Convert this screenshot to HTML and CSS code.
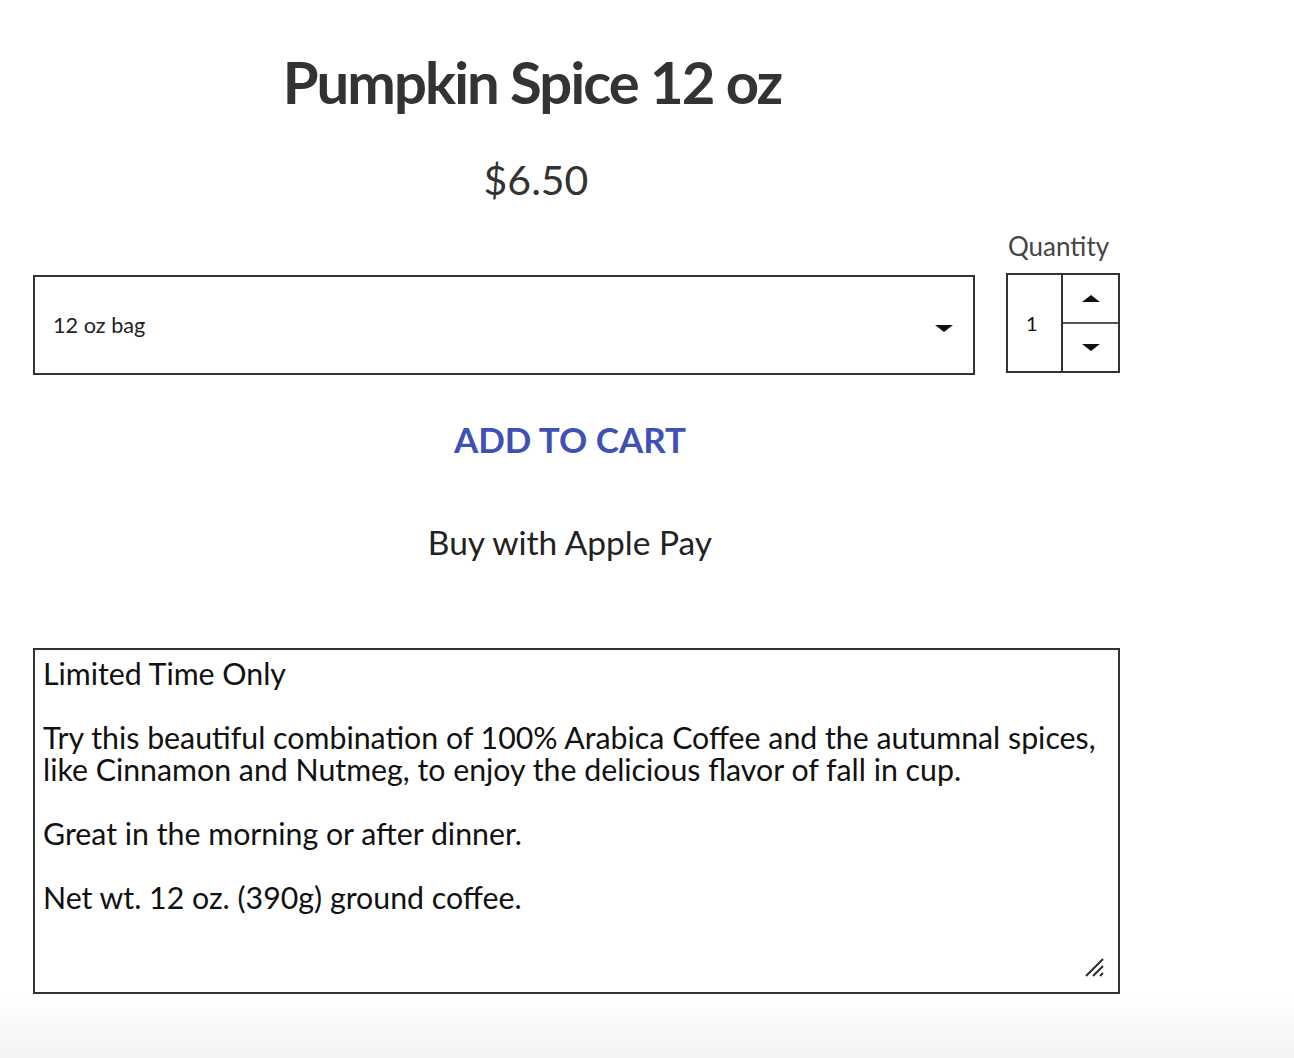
FILE: index.html
```html
<!DOCTYPE html>
<html lang="en">
<head>
<meta charset="utf-8">
<title>Pumpkin Spice 12 oz</title>
<link rel="stylesheet" href="styles.css">
</head>
<body>
<main class="product">
  <h1 class="product-title">Pumpkin Spice 12 oz</h1>
  <div class="product-price">$6.50</div>

  <div class="options-row">
    <div class="select-wrap">
      <select class="variant-select" aria-label="Size">
        <option>12 oz bag</option>
      </select>
      <span class="select-arrow"></span>
    </div>
    <div class="qty">
      <label class="qty-label" for="qty">Quantity</label>
      <div class="qty-box">
        <input id="qty" class="qty-input" type="text" value="1">
        <div class="qty-buttons">
          <button class="qty-btn" type="button" aria-label="Increase"><span class="tri-up"></span></button>
          <button class="qty-btn" type="button" aria-label="Decrease"><span class="tri-down"></span></button>
        </div>
      </div>
    </div>
  </div>

  <button class="add-to-cart" type="button">ADD TO CART</button>
  <button class="apple-pay" type="button">Buy with Apple Pay</button>

  <div class="description-wrap">
    <textarea class="description" wrap="off" aria-label="Description">Limited Time Only

Try this beautiful combination of 100% Arabica Coffee and the autumnal spices,
like Cinnamon and Nutmeg, to enjoy the delicious flavor of fall in cup.

Great in the morning or after dinner.

Net wt. 12 oz. (390g) ground coffee.</textarea>
    <svg class="resize-grip" width="22" height="22" viewBox="0 0 22 22" aria-hidden="true">
      <line x1="2" y1="19" x2="19" y2="2" stroke="#2a2a2a" stroke-width="2"/>
      <line x1="9" y1="19" x2="19" y2="9" stroke="#2a2a2a" stroke-width="2"/>
      <line x1="16" y1="19" x2="19" y2="16" stroke="#2a2a2a" stroke-width="2"/>
    </svg>
  </div>
</main>
</body>
</html>
```

FILE: styles.css
```css
html {
  background: linear-gradient(to bottom, #ffffff 0, #ffffff 995px, #f3f3f3 1058px);
  min-height: 100%;
}
body {
  margin: 0;
  font-family: "Lato", "Noto Sans", sans-serif;
  color: #333;
}
.product {
  width: 1086px;
  padding: 0 0 0 33px;
  display: flex;
  flex-direction: column;
}
.product-title {
  margin: 46px 0 0 0;
  padding-right: 88px;
  text-align: center;
  font-family: "Lato", sans-serif;
  font-weight: 700;
  font-size: 58px;
  line-height: 72px;
  letter-spacing: -1.9px;
  color: #333;
}
.product-price {
  margin-top: 38px;
  padding-right: 80px;
  text-align: center;
  font-size: 41px;
  line-height: 48px;
  color: #333;
}
.options-row {
  display: flex;
  align-items: flex-end;
  gap: 31px;
  margin-top: 28px;
}
.select-wrap {
  position: relative;
  flex: 0 0 942px;
}
.variant-select {
  appearance: none;
  -webkit-appearance: none;
  width: 942px;
  height: 100px;
  margin: 0 0 -2px 0;
  border: 2px solid #333;
  border-radius: 0;
  background: #fff;
  padding: 0 18px;
  font-family: "Lato", sans-serif;
  font-size: 21.7px;
  color: #222;
}
.select-arrow {
  position: absolute;
  right: 22px;
  top: 50px;
  width: 0;
  height: 0;
  border-left: 9px solid transparent;
  border-right: 9px solid transparent;
  border-top: 7px solid #111;
}
.qty {
  display: flex;
  flex-direction: column;
  align-items: flex-start;
}
.qty-label {
  font-size: 26px;
  line-height: 28px;
  color: #444;
  margin: 0 0 13px 2px;
}
.qty-box {
  display: flex;
  width: 114px;
  height: 100px;
  box-sizing: border-box;
  border: 2px solid #333;
  background: #fff;
}
.qty-input {
  width: 55px;
  box-sizing: border-box;
  border: 0;
  border-right: 2px solid #333;
  padding: 0 0 0 18px;
  font-family: "Lato", sans-serif;
  font-size: 20px;
  color: #111;
  outline: none;
  background: transparent;
}
.qty-buttons {
  flex: 1;
  display: flex;
  flex-direction: column;
}
.qty-btn {
  flex: 1;
  border: 0;
  background: transparent;
  padding: 0;
  display: flex;
  align-items: center;
  justify-content: center;
}
.qty-btn + .qty-btn {
  border-top: 2px solid #555;
}
.tri-up, .tri-down {
  width: 0;
  height: 0;
  border-left: 9px solid transparent;
  border-right: 9px solid transparent;
}
.tri-up { border-bottom: 7px solid #111; }
.tri-down { border-top: 7px solid #111; }
.add-to-cart {
  align-self: center;
  margin-top: 42px;
  margin-left: -12px;
  border: 0;
  background: transparent;
  font-family: "Lato", sans-serif;
  font-weight: 700;
  font-size: 35px;
  line-height: 48px;
  color: #3f51b5;
  padding: 0;
}
.apple-pay {
  align-self: center;
  margin-top: 59px;
  margin-left: -12px;
  border: 0;
  background: transparent;
  font-family: "Lato", sans-serif;
  font-size: 33.5px;
  line-height: 40px;
  color: #222;
  padding: 0;
}
.description-wrap {
  position: relative;
  margin-top: 86px;
  width: 1087px;
  height: 346px;
}
.description {
  display: block;
  width: 1087px;
  height: 346px;
  box-sizing: border-box;
  border: 2px solid #333;
  border-radius: 0;
  padding: 7px 8px;
  font-family: "Lato", sans-serif;
  font-size: 30.3px;
  line-height: 32px;
  color: #111;
  overflow: hidden;
  resize: none;
  background: #fff;
}
.resize-grip {
  position: absolute;
  right: 14px;
  bottom: 15px;
}
```
